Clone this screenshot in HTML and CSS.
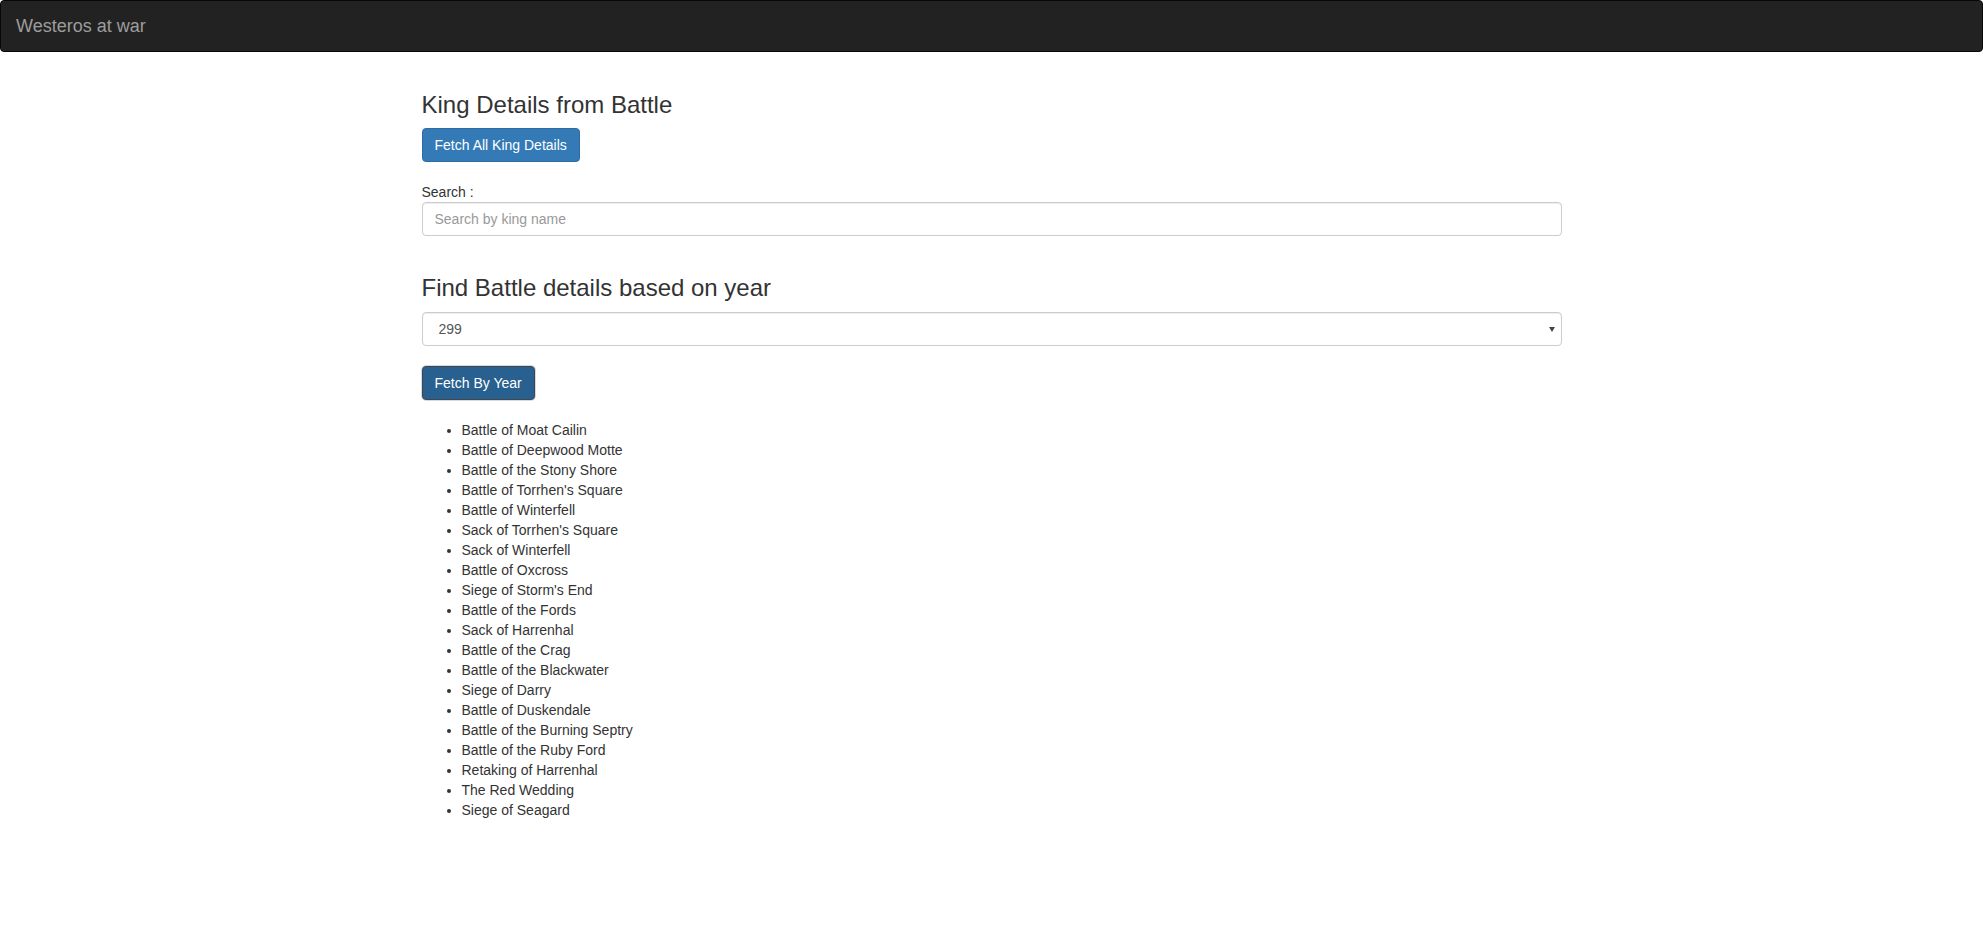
FILE: index.html
```html
<!DOCTYPE html>
<html>
<head>
<meta charset="utf-8">
<title>Westeros at war</title>
<link rel="stylesheet" href="styles.css">
</head>
<body>
<nav class="navbar">
  <div class="navbar-inner">
    <a class="brand" href="#">Westeros at war</a>
  </div>
</nav>
<div class="container">
  <h3 class="title">King Details from Battle</h3>
  <button class="btn btn-primary">Fetch All King Details</button>
  <div class="form-group search-group">
    <label class="label" for="search">Search :</label>
    <input id="search" class="form-control" type="text" placeholder="Search by king name">
  </div>
  <h3 class="title year-title">Find Battle details based on year</h3>
  <div class="select-wrap">
    <select class="form-control select">
      <option>299</option>
    </select>
  </div>
  <button class="btn btn-primary btn-active">Fetch By Year</button>
  <ul class="battles">
    <li>Battle of Moat Cailin</li>
    <li>Battle of Deepwood Motte</li>
    <li>Battle of the Stony Shore</li>
    <li>Battle of Torrhen's Square</li>
    <li>Battle of Winterfell</li>
    <li>Sack of Torrhen's Square</li>
    <li>Sack of Winterfell</li>
    <li>Battle of Oxcross</li>
    <li>Siege of Storm's End</li>
    <li>Battle of the Fords</li>
    <li>Sack of Harrenhal</li>
    <li>Battle of the Crag</li>
    <li>Battle of the Blackwater</li>
    <li>Siege of Darry</li>
    <li>Battle of Duskendale</li>
    <li>Battle of the Burning Septry</li>
    <li>Battle of the Ruby Ford</li>
    <li>Retaking of Harrenhal</li>
    <li>The Red Wedding</li>
    <li>Siege of Seagard</li>
  </ul>
</div>
</body>
</html>
```

FILE: styles.css
```css
* { box-sizing: border-box; }
html, body { margin: 0; padding: 0; }
body {
  font-family: "Liberation Sans", Arial, Helvetica, sans-serif;
  font-size: 14px;
  line-height: 20px;
  color: #333;
  background: #fff;
}
.navbar {
  min-height: 52px;
  background: #222;
  border: 1px solid #080808;
  border-radius: 4px;
  margin-bottom: 20px;
}
.navbar-inner {
  display: flex;
  align-items: center;
  height: 50px;
}
.brand {
  padding: 15px;
  font-size: 18px;
  line-height: 20px;
  color: #9d9d9d;
  text-decoration: none;
}
.container {
  width: 1170px;
  margin: 0 auto;
  padding: 20px 15px 40px;
  display: flex;
  flex-direction: column;
  align-items: flex-start;
}
.title {
  font-size: 24px;
  font-weight: 500;
  line-height: 26.4px;
  margin: 0 0 10px;
  color: #333;
}
.year-title {
  margin-top: 39px;
}
.btn {
  display: inline-block;
  font-family: inherit;
  font-size: 14px;
  line-height: 20px;
  padding: 6px 12px;
  border: 1px solid transparent;
  border-radius: 4px;
  cursor: pointer;
}
.btn-primary {
  color: #fff;
  background: #337ab7;
  border-color: #2e6da4;
}
.btn-active {
  background: #286090;
  border-color: #3e4650;
  box-shadow: 0 0 0 1px rgba(0,0,0,0.15);
  margin-top: 20px;
}
.search-group {
  width: 100%;
  margin-top: 20px;
}
.label {
  display: block;
  margin-bottom: 0;
  font-weight: normal;
}
.form-control {
  display: block;
  width: 100%;
  height: 34px;
  padding: 6px 12px;
  font-family: inherit;
  font-size: 14px;
  line-height: 20px;
  color: #555;
  background: #fff;
  border: 1px solid #ccc;
  border-radius: 4px;
  box-shadow: inset 0 1px 1px rgba(0,0,0,0.075);
}
.form-control::placeholder { color: #999; }
.select-wrap {
  position: relative;
  width: 100%;
}
.select {
  -webkit-appearance: none;
  appearance: none;
  padding-left: 16px;
}
.select-wrap::after {
  content: "";
  position: absolute;
  right: 7px;
  top: 15px;
  border-left: 3px solid transparent;
  border-right: 3px solid transparent;
  border-top: 5px solid #444;
  pointer-events: none;
}
.battles {
  margin: 20px 0 10px;
  padding-left: 40px;
}
```
